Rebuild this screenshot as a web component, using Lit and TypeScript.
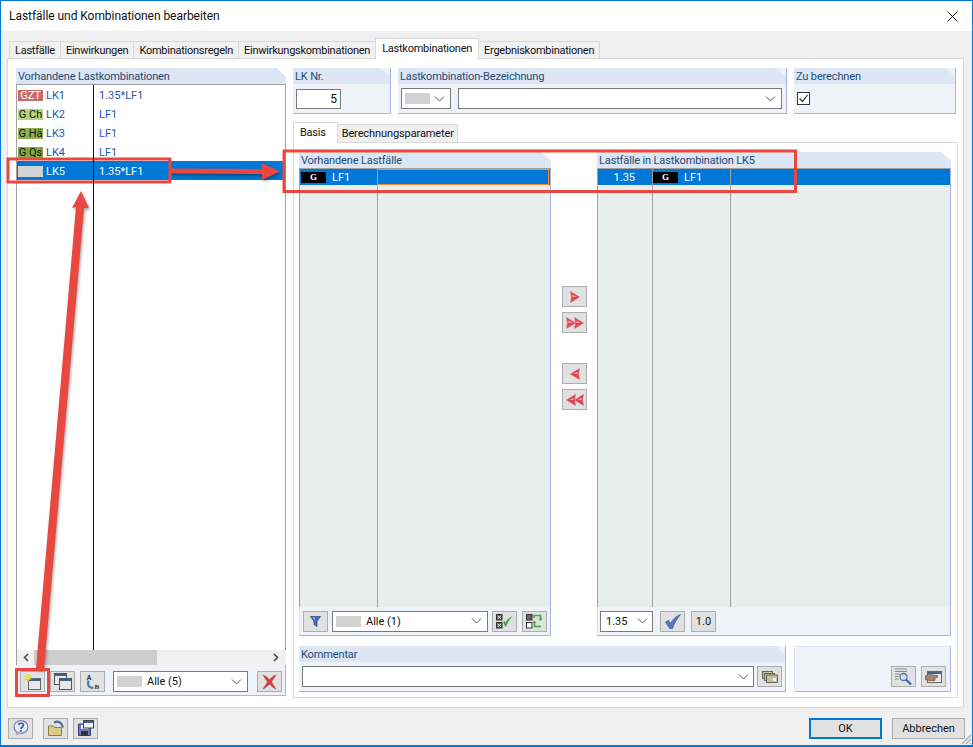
import { LitElement, html, css, svg } from "lit";
import { customElement } from "lit/decorators.js";

const chevron = html`<svg class="chev" width="11" height="6" viewBox="0 0 11 6"><path d="M1 .5l4.500 4.500L10 .5" fill="none" stroke="#555" stroke-width="1"/></svg>`;

const icons: Record<string, unknown> = {
  help: html`<svg width="16" height="16" viewBox="0 0 16 16"><ellipse cx="8" cy="7" rx="7" ry="6.400" fill="#e6e9f4" stroke="#7c84a8" stroke-width="1.200"/><path d="M4 12l-1.500 3.500L8 13z" fill="#9aa0c0"/><path d="M5.600 5c.5-2.400 5-2.400 4.800.3-.1 1.700-2.400 1.700-2.500 3.700" fill="none" stroke="#3657a8" stroke-width="1.700"/><rect x="7" y="10" width="1.800" height="1.800" fill="#3657a8"/></svg>`,
  open: html`<svg width="16" height="16" viewBox="0 0 16 16"><path d="M.5 6h5l1 1.500h7V15.500H.5z" fill="#d9cc88" stroke="#8a7d40"/><path d="M6 2.500c4-2 8-.5 9 5" fill="none" stroke="#4a69a4" stroke-width="2.200"/></svg>`,
  save: html`<svg width="16" height="16" viewBox="0 0 16 16"><path d="M.5 4h12v11.500H.5z" fill="#7076bc" stroke="#3c4080"/><rect x="3" y="11" width="7" height="4.500" fill="#333"/><rect x="3" y="5" width="7" height="4" fill="#eee"/><rect x="5.500" y=".5" width="10" height="7.500" fill="#f4f4f4" stroke="#444"/><rect x="6" y="1" width="9" height="2" fill="#3a5ea8"/></svg>`,
  newWin: html`<svg width="17" height="16" viewBox="0 0 17 16"><rect x="4.500" y="4.500" width="12" height="11" fill="#e8e8e8" stroke="#666"/><rect x="5" y="5" width="11" height="2" fill="#3f5f98"/><path d="M4 0l1 2.200 2.300-.5L6 3.700l1.300 2-2.300-.5-1 2.200-1-2.200-2.300.5 1.300-2L.7 1.700 3 2.200z" fill="#f4ec3c" stroke="#c8b830" stroke-width=".4"/></svg>`,
  copyWin: html`<svg width="18" height="17" viewBox="0 0 18 17"><rect x=".5" y=".5" width="12" height="11" fill="#e8e8e8" stroke="#555"/><rect x="1" y="1" width="11" height="2" fill="#3f5f98"/><rect x="5.500" y="5.500" width="12" height="11" fill="#e8e8e8" stroke="#555"/><rect x="6" y="6" width="11" height="2" fill="#3f5f98"/></svg>`,
  renum: html`<svg width="16" height="17" viewBox="0 0 16 17"><text x="1.500" y="6.500" font-size="7" font-family="Liberation Sans" font-weight="700" fill="#333">A</text><text x="9.500" y="15.500" font-size="7" font-family="Liberation Serif" font-weight="700" fill="#333">B</text><path d="M3.500 7.500c-1.500 4 0 7.500 5 7.500" fill="none" stroke="#4a7cb8" stroke-width="2.200"/></svg>`,
  del: html`<svg width="15" height="16" viewBox="0 0 15 16"><path d="M1 1c3 1 5 3 6.500 4.800C9 4 11 2 14 1c-1.500 3-3.500 5-4.500 7 1 2 3 4.500 4.500 7-2.800-1-5-3.200-6.500-5-1.500 1.800-3.700 4-6.500 5 1.500-2.500 3.500-5 4.500-7C4.500 6 2.500 4 1 1z" fill="#dc3c38" stroke="#a0403c" stroke-width=".5"/></svg>`,
  filter: html`<svg width="11" height="11" viewBox="0 0 11 11"><path d="M.5.5h10L7 5.500v5L4 8.500v-3z" fill="#3f6fc0" stroke="#26437c" stroke-width=".7"/><path d="M2.500 1.500h2l.8 3z" fill="#a8c8f0"/></svg>`,
  checkAll: html`<svg width="17" height="15" viewBox="0 0 17 15"><rect x=".5" y=".5" width="5.500" height="5.500" fill="#666" stroke="#333"/><rect x=".5" y="8.500" width="5.500" height="5.500" fill="#666" stroke="#333"/><path d="M1.800 1.800l3 3M4.800 1.800l-3 3M1.800 9.800l3 3M4.800 9.800l-3 3" stroke="#fff" stroke-width=".8"/><path d="M7 8l2.500 5c2-4.500 4-7.500 7-11-4 2-6 4.500-7.200 7L8.500 7z" fill="#2cac2c"/></svg>`,
  swapAll: html`<svg width="17" height="15" viewBox="0 0 17 15"><rect x=".5" y=".5" width="5.500" height="5.500" fill="#666" stroke="#333"/><rect x=".5" y="8.500" width="5.500" height="5.500" fill="#fff" stroke="#333"/><path d="M8 4V1.500h6.500V5M15 12.500H8.500V9" fill="none" stroke="#3cac3c" stroke-width="1.600"/><path d="M12.500 4.500h4l-2 2.500zM6.500 9h4l-2-2.500z" fill="#3cac3c"/></svg>`,
  check: html`<svg width="16" height="15" viewBox="0 0 16 15"><path d="M.5 8l3-1.500 2 3C8 5 11.500 2 15.500.5c-3.500 4-6.500 9-8 14H4.500z" fill="#5078d0" stroke="#3c5088" stroke-width=".7"/></svg>`,
  comment: html`<svg width="16" height="12" viewBox="0 0 16 12"><rect x=".5" y=".5" width="10" height="7" fill="#c8c098" stroke="#666"/><rect x="2.500" y="2.500" width="10" height="7" fill="#c8c098" stroke="#666"/><rect x="4.500" y="4" width="11" height="7.500" fill="#c8c098" stroke="#666"/><rect x="11" y="7" width="3" height="3" fill="#f4f4f4"/></svg>`,
  search: html`<svg width="17" height="17" viewBox="0 0 17 17"><path d="M0 1h12M0 3.500h12M0 6h5M0 8.500h3.500M0 11h3.500" stroke="#888"/><circle cx="8.500" cy="9" r="3.500" fill="#cfe0f4" stroke="#5a74a8" stroke-width="1.300"/><path d="M11 11.500l5 5" stroke="#3d63b0" stroke-width="2.200"/></svg>`,
  hand: html`<svg width="17" height="12" viewBox="0 0 17 12"><rect x="2.500" y=".5" width="14" height="11" fill="#e8e8e8" stroke="#666"/><rect x="3" y="1" width="13" height="2" fill="#3f5f98"/><path d="M0 5l4.500-1.500 8 1v2l-2.500.5v2.500H5L0 8.500z" fill="#a88470" stroke="#5c4030" stroke-width=".6"/></svg>`,
};

// transfer arrows between the two lists, single or double, slightly notched, red with a pale bevel
const tri = (left: boolean, double: boolean) => {
  const one = (x: number) =>
    left
      ? svg`<path d="M${x + 9} .5L${x} 6l9 5.500-1-5.500z" fill="#ea3f50" stroke="#c06a74" stroke-width=".6"/><path d="M${x + 7} 4v2H${x + 3}z" fill="#f7aeb6"/>`
      : svg`<path d="M${x} .5L${x + 9} 6l-9 5.500 1-5.500z" fill="#ea3f50" stroke="#c06a74" stroke-width=".6"/><path d="M${x + 2} 3.500l4 2.500H${x + 2}z" fill="#f7aeb6"/>`;
  return html`<svg width="18" height="12" viewBox="0 0 18 12">${double ? [one(0.5), one(8.5)] : one(4.5)}</svg>`;
};

const rows = [
  { chip: "GZT", cls: "gzt", name: "LK1", val: "1.35*LF1" },
  { chip: "G Ch", cls: "gch", name: "LK2", val: "LF1" },
  { chip: "G Hä", cls: "gha", name: "LK3", val: "LF1" },
  { chip: "G Qs", cls: "gqs", name: "LK4", val: "LF1" },
  { chip: "", cls: "blank", name: "LK5", val: "1.35*LF1", sel: true },
];

@customElement("app-root")
export class AppRoot extends LitElement {
  static override styles = css`
    :host {
      display: block;
      width: 973px;
      height: 747px;
      font-family: Roboto, "Noto Sans", sans-serif;
      font-size: 11px;
      color: #111;
      overflow: hidden;
    }
    * {
      box-sizing: border-box;
    }
    .window {
      position: relative;
      width: 973px;
      height: 747px;
      border: 1px solid #0078d7;
      border-bottom-width: 2px;
      display: flex;
      flex-direction: column;
      background: #f0f0f0;
    }
    .titlebar {
      height: 30px;
      flex: none;
      background: #fff;
      display: flex;
      align-items: center;
      justify-content: space-between;
      padding: 0 14px 0 8px;
      font-size: 12px;
      letter-spacing: -0.05px;
    }
    .body {
      flex: 1;
      display: flex;
      flex-direction: column;
      padding: 10px 8px 0 6px;
    }
    .tabs {
      display: flex;
      height: 18px;
      align-items: flex-end;
      padding-left: 2px;
      position: relative;
      z-index: 1;
      margin-bottom: -1px;
    }
    .tab {
      height: 17px;
      margin-bottom: 1px;
      padding: 0 5px;
      line-height: 18px;
      background: #f0f0f0;
      border: 1px solid #d9d9d9;
      border-bottom: 0;
      margin-right: -1px;
      white-space: nowrap;
      font-size: 11px;
      letter-spacing: -0.25px;
    }
    .tab.on {
      height: 21px;
      margin-bottom: 0;
      background: #fff;
      padding: 0 6px;
      line-height: 20px;
      position: relative;
    }
    .main {
      height: 650px;
      background: #fff;
      border: 1px solid #d9d9d9;
      padding: 9px 0 0 8px;
      display: grid;
      grid-template-columns: 270px 665px;
      column-gap: 7px;
    }
    .head {
      height: 16px;
      background: #dce6f4;
      color: #1d4a78;
      padding: 1px 0 0 2px;
      line-height: 16px;
      letter-spacing: -0.14px;
      white-space: nowrap;
      clip-path: polygon(0 0, calc(100% - 9px) 0, 100% 9px, 100% 100%, 0 100%);
    }
    .left {
      display: flex;
      flex-direction: column;
      height: 628px;
    }
    .list {
      flex: 1;
      border-left: 1px solid #a0a0a0;
      border-right: 1px solid #a0a0a0;
      border-top: 1px solid #a0a0a0;
      background: #fff;
      position: relative;
    }
    .divider {
      position: absolute;
      left: 76px;
      top: 0;
      bottom: 0;
      width: 1px;
      background: #111;
      z-index: 1;
    }
    .row {
      height: 19px;
      display: grid;
      grid-template-columns: 77px 1fr;
      align-items: center;
      color: #2456b4;
      line-height: 17px;
    }
    .row .c1 {
      display: flex;
      align-items: center;
      gap: 3px;
      padding: 2px 0 0 1px;
    }
    .row .c2 {
      padding: 2px 0 0 5px;
    }
    .row.sel {
      background: #0078d7;
      color: #fff;
    }
    .chip {
      width: 25px;
      height: 11px;
      line-height: 11px;
      text-align: center;
      color: #111;
      overflow: hidden;
      white-space: nowrap;
      font-size: 11px;
    }
    .gzt { background: #c76a6a; color: #fff; }
    .gch { background: #b5d47e; }
    .gha { background: #8fb04c; }
    .gqs { background: #86a644; }
    .blank { background: #d2d2d2; }
    .hscroll {
      height: 15px;
      background: #f0f0f0;
      display: flex;
      align-items: center;
      justify-content: space-between;
      padding: 0 7px 0 6px;
      position: relative;
      border-left: 1px solid #a0a0a0;
    }
    .hscroll i {
      position: absolute;
      left: 17px;
      width: 123px;
      top: 0;
      bottom: 0;
      background: #cdcdcd;
    }
    .bar {
      background: #eff2f9;
      border-right: 1px solid #aab0e8;
      border-bottom: 1px solid #aab0e8;
      display: flex;
      align-items: center;
    }
    .left .bar {
      height: 31px;
      padding: 3px 3px 0 4px;
    }
    .btn {
      width: 25px;
      height: 21px;
      background: #e1e1e1;
      border: 1px solid #adadad;
      display: flex;
      align-items: center;
      justify-content: center;
      flex: none;
      overflow: hidden;
    }
    .select {
      background: #fff;
      border: 1px solid #7a7a7a;
      height: 21px;
      display: flex;
      align-items: center;
      justify-content: space-between;
      padding: 0 5px 0 3px;
      flex: none;
    }
    .select .lab {
      display: flex;
      align-items: center;
      gap: 5px;
      font-size: 11px;
    }
    .select .lab b {
      display: block;
      width: 25px;
      height: 11px;
      background: #d2d2d2;
    }
    .right {
      display: flex;
      flex-direction: column;
    }
    .top {
      display: grid;
      grid-template-columns: 98px 389px 162px;
      column-gap: 7px;
      height: 46px;
    }
    .box {
      background: #eff2f9;
      border-right: 1px solid #aab0e8;
      border-bottom: 1px solid #aab0e8;
      display: flex;
      flex-direction: column;
    }
    .box .content {
      flex: 1;
      display: flex;
      align-items: center;
      padding: 0 3px;
      gap: 7px;
    }
    .num {
      width: 45px;
      height: 20px;
      background: #fff;
      border: 1px solid #7a7a7a;
      text-align: right;
      padding-right: 3px;
      line-height: 19px;
      font-size: 12px;
    }
    .cb {
      width: 13px;
      height: 13px;
      background: #fff;
      border: 1px solid #333;
      display: flex;
      align-items: center;
      justify-content: center;
    }
    .subtabs {
      display: flex;
      height: 21px;
      margin-top: 8px;
      align-items: flex-end;
      position: relative;
      z-index: 1;
      margin-bottom: -1px;
    }
    .subtabs .tab:not(.on) {
      height: 18px;
      letter-spacing: -0.1px;
      padding: 0 3px 0 4px;
    }
    .subtabs .tab.on {
      padding: 0 11px 0 6px;
    }
    .subpanel {
      height: 556px;
      width: 665px;
      border: 1px solid #d9d9d9;
      background: #fff;
      padding: 9px 6px 0 5px;
    }
    .lists {
      display: grid;
      grid-template-columns: 252px 46px 354px;
      height: 484px;
    }
    .table {
      display: flex;
      flex-direction: column;
      height: 484px;
    }
    .tbody {
      flex: 1;
      background: #e8eeec;
      border-top: 1px solid #a0a0a0;
      border-left: 1px solid #a0a0a0;
      border-right: 1px solid #aab0e8;
      position: relative;
    }
    .col {
      position: absolute;
      top: 0;
      bottom: 0;
      width: 1px;
      background: #a0a0a0;
    }
    .trow {
      height: 16px;
      background: #0078d7;
      color: #fff;
      display: flex;
      align-items: center;
      position: relative;
    }
    .gtag {
      width: 25px;
      height: 11px;
      background: #000;
      color: #fff;
      font-size: 9px;
      line-height: 11px;
      text-align: center;
      font-weight: 700;
      font-family: "Liberation Serif", serif;
      flex: none;
    }
    .lf {
      margin-left: 6px;
    }
    .factor {
      width: 37px;
      margin-right: 18px;
      text-align: right;
    }
    .focus {
      position: absolute;
      left: 77px;
      right: 1px;
      top: 0;
      bottom: 0;
      border: 1px solid #f09030;
    }
    .table .bar {
      height: 29px;
      border-left: 1px solid #dfe3f5;
    }
    .mid {
      display: flex;
      flex-direction: column;
      align-items: center;
      padding: 134px 0 0 1px;
      gap: 5px;
    }
    .mid .gap {
      height: 20px;
    }
    .bottom {
      display: grid;
      grid-template-columns: 487px 157px;
      column-gap: 8px;
      margin-top: 10px;
    }
    .bottom .box.comment {
      height: 46px;
    }
    .bottom .plain {
      height: 46px;
      background: #eff2f9;
      border: 1px solid #dfe3f5;
      border-right-color: #aab0e8;
      border-bottom-color: #aab0e8;
      display: flex;
      justify-content: flex-end;
      align-items: flex-end;
      gap: 5px;
      padding: 0 4px 4px 0;
    }
    .footer {
      flex: 1;
      display: flex;
      align-items: center;
      justify-content: space-between;
      padding: 3px 0 0 1px;
      margin-right: -1px;
    }
    .footer .group {
      display: flex;
      align-items: center;
    }
    .cmd {
      width: 73px;
      height: 21px;
      background: #e1e1e1;
      border: 1px solid #adadad;
      text-align: center;
      line-height: 19px;
      font-size: 11px;
    }
    .cmd.def {
      border: 2px solid #0078d7;
      line-height: 17px;
      margin-right: 10px;
    }
    .overlay {
      position: absolute;
      left: -1px;
      top: -1px;
      pointer-events: none;
    }
    .arrows {
      filter: drop-shadow(1px 2px 1.500px rgba(0, 0, 0, 0.35));
    }
    .grip {
      position: absolute;
      right: 0;
      bottom: 0;
    }
  `;

  override render() {
    return html`
      <div class="window">
        <div class="titlebar">
          <span>Lastfälle und Kombinationen bearbeiten</span>
          <svg width="11" height="11" viewBox="0 0 11 11"><path d="M.5.5l10 10M10.500.5l-10 10" stroke="#111" stroke-width="1"/></svg>
        </div>
        <div class="body">
          <div class="tabs">
            ${["Lastfälle", "Einwirkungen", "Kombinationsregeln", "Einwirkungskombinationen"].map(
              (t) => html`<div class="tab">${t}</div>`,
            )}
            <div class="tab on">Lastkombinationen</div>
            <div class="tab">Ergebniskombinationen</div>
          </div>
          <div class="main">
            ${this.renderLeft()}
            <div class="right">
              <div class="top">
                <div class="box">
                  <div class="head">LK Nr.</div>
                  <div class="content"><div class="num">5</div></div>
                </div>
                <div class="box">
                  <div class="head">Lastkombination-Bezeichnung</div>
                  <div class="content">
                    <div class="select" style="width:50px"><span class="lab"><b></b></span>${chevron}</div>
                    <div class="select" style="width:324px"><span></span>${chevron}</div>
                  </div>
                </div>
                <div class="box">
                  <div class="head">Zu berechnen</div>
                  <div class="content">
                    <div class="cb"><svg width="11" height="11" viewBox="0 0 11 11"><path d="M1.500 5.500l3 3 5-6.500" fill="none" stroke="#333" stroke-width="1.200"/></svg></div>
                  </div>
                </div>
              </div>
              <div class="subtabs">
                <div class="tab on">Basis</div>
                <div class="tab">Berechnungsparameter</div>
              </div>
              ${this.renderSubpanel()}
            </div>
          </div>
          <div class="footer">
            <div class="group">
              <div class="btn" style="margin-right:10px">${icons.help}</div>
              <div class="btn" style="margin-right:5px">${icons.open}</div>
              <div class="btn">${icons.save}</div>
            </div>
            <div class="group">
              <div class="cmd def">OK</div>
              <div class="cmd">Abbrechen</div>
            </div>
          </div>
        </div>
        <svg class="grip" width="12" height="12" viewBox="0 0 12 12"><path d="M11 2L2 11M11 6l-5 5M11 10l-1 1" stroke="#aaa" stroke-width="1.200"/></svg>
        ${this.renderOverlay()}
      </div>
    `;
  }

  private renderLeft() {
    return html`
      <div class="left">
        <div class="head">Vorhandene Lastkombinationen</div>
        <div class="list">
          <div class="divider"></div>
          ${rows.map(
            (r) => html`
              <div class="row ${r.sel ? "sel" : ""}">
                <div class="c1"><span class="chip ${r.cls}">${r.chip}</span>${r.name}</div>
                <div class="c2">${r.val}</div>
              </div>
            `,
          )}
        </div>
        <div class="hscroll">
          <i></i>
          <svg width="6" height="9" viewBox="0 0 6 9"><path d="M5 1L1.500 4.500 5 8" fill="none" stroke="#444" stroke-width="1.500"/></svg>
          <svg width="6" height="9" viewBox="0 0 6 9"><path d="M1 1l3.500 3.500L1 8" fill="none" stroke="#444" stroke-width="1.500"/></svg>
        </div>
        <div class="bar">
          <div class="btn" style="margin-right:5px">${icons.newWin}</div>
          <div class="btn" style="margin-right:5px">${icons.copyWin}</div>
          <div class="btn" style="margin-right:8px">${icons.renum}</div>
          <div class="select" style="width:135px;margin-right:9px"><span class="lab"><b></b>Alle (5)</span>${chevron}</div>
          <div class="btn">${icons.del}</div>
        </div>
      </div>
    `;
  }

  private renderSubpanel() {
    return html`
      <div class="subpanel">
        <div class="lists">
          <div class="table">
            <div class="head">Vorhandene Lastfälle</div>
            <div class="tbody">
              <div class="col" style="left:77px"></div>
              <div class="trow">
                <span class="gtag" style="margin-left:1px">G</span><span class="lf">LF1</span>
                <div class="focus"></div>
              </div>
            </div>
            <div class="bar" style="padding:0 3px">
              <div class="btn" style="margin-right:4px">${icons.filter}</div>
              <div class="select" style="width:156px;margin-right:4px"><span class="lab"><b></b>Alle (1)</span>${chevron}</div>
              <div class="btn" style="margin-right:5px">${icons.checkAll}</div>
              <div class="btn">${icons.swapAll}</div>
            </div>
          </div>
          <div class="mid">
            <div class="btn">${tri(false, false)}</div>
            <div class="btn">${tri(false, true)}</div>
            <div class="gap"></div>
            <div class="btn">${tri(true, false)}</div>
            <div class="btn">${tri(true, true)}</div>
          </div>
          <div class="table">
            <div class="head">Lastfälle in Lastkombination LK5</div>
            <div class="tbody">
              <div class="trow">
                <span class="factor">1.35</span>
                <span class="gtag">G</span>
                <span class="lf">LF1</span>
              </div>
              <div class="col" style="left:54px"></div>
              <div class="col" style="left:132px"></div>
            </div>
            <div class="bar" style="padding:0 2px">
              <div class="select" style="width:53px;padding-right:4px;margin-right:7px"><span style="padding-left:2px">1.35</span>${chevron}</div>
              <div class="btn" style="margin-right:6px">${icons.check}</div>
              <div class="btn">1.0</div>
            </div>
          </div>
        </div>
        <div class="bottom">
          <div class="box comment">
            <div class="head">Kommentar</div>
            <div class="content" style="padding:4px 3px 0;gap:3px;align-items:flex-start">
              <div class="select" style="width:452px;padding-right:4px"><span></span>${chevron}</div>
              <div class="btn">${icons.comment}</div>
            </div>
          </div>
          <div class="plain">
            <div class="btn">${icons.search}</div>
            <div class="btn">${icons.hand}</div>
          </div>
        </div>
      </div>
    `;
  }

  private renderOverlay() {
    const red = "#e8483f";
    return html`
      <svg class="overlay" width="973" height="747" viewBox="0 0 973 747">
        <g class="arrows" fill=${red}>
          <path d="M170 168.500L262 169v-6l18 8.500-18 8.500v-6l-92-.5z"/>
          <path d="M36 669L76 207l-4 1 9-17 8 17-5 0L44 669z"/>
        </g>
        <g fill="none" stroke=${red} stroke-width="3">
          <rect x="8" y="159" width="162" height="23"/>
          <rect x="284" y="151" width="511.500" height="40.500"/>
          <rect x="16.500" y="669.500" width="32" height="26"/>
        </g>
      </svg>
    `;
  }
}

declare global {
  interface HTMLElementTagNameMap {
    "app-root": AppRoot;
  }
}
